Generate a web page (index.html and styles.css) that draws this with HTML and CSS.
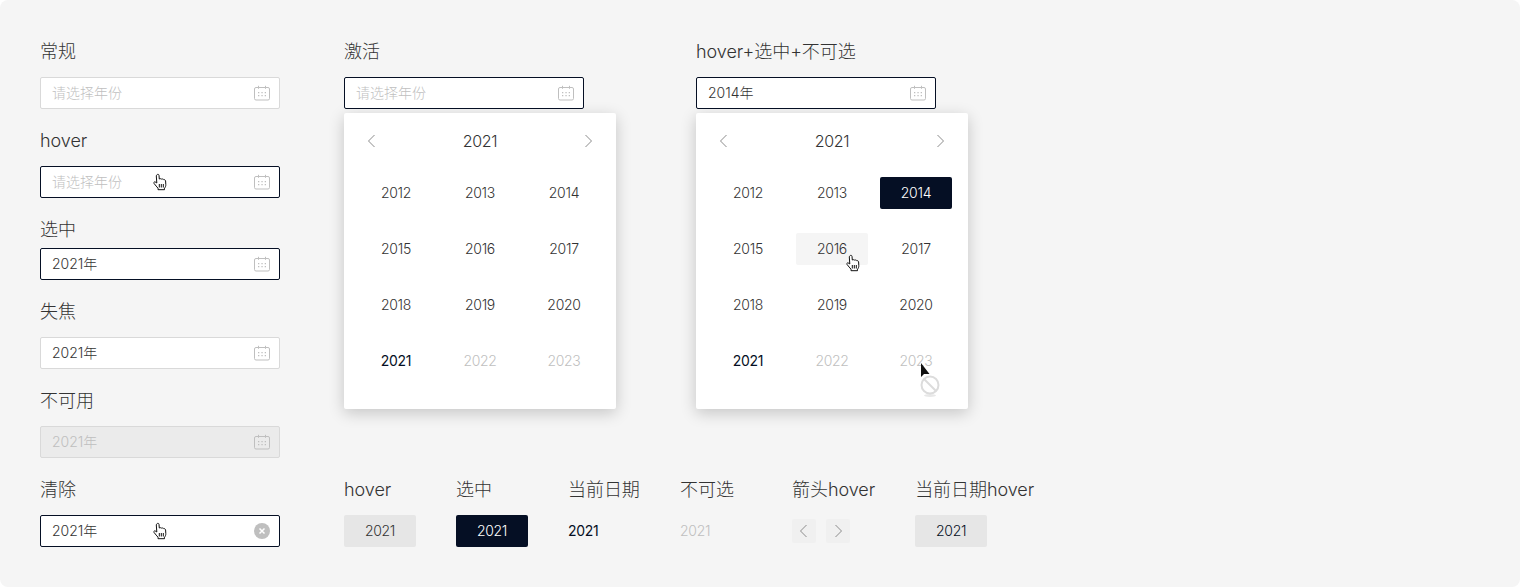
FILE: index.html
```html
<!DOCTYPE html>
<html lang="zh-CN">
<head>
  <meta charset="UTF-8" />
  <title>年份选择器</title>
  <link rel="stylesheet" href="styles.css">
</head>
<body>
  <svg class="defs" width="0" height="0">
    <symbol id="i-cal" viewBox="0 0 16 16">
      <path d="M2 2.500h12a1.500 1.500 0 0 1 1.500 1.500v9.500a1.500 1.500 0 0 1-1.500 1.500H2a1.500 1.500 0 0 1-1.500-1.500V4A1.500 1.500 0 0 1 2 2.500z" fill="none" stroke="currentColor"/>
      <path d="M4.500 .8v3M11.500 .8v3" fill="none" stroke="currentColor"/>
      <path d="M4 7h1.300v1.200H4zM7.400 7h1.300v1.200H7.400zM10.700 7H12v1.200h-1.300zM4 10h1.300v1.200H4zM7.400 10h1.300v1.200H7.400zM10.700 10H12v1.200h-1.300z" fill="currentColor"/>
    </symbol>
    <symbol id="i-left" viewBox="0 0 16 16">
      <path d="M10.500 2 4.500 8l6 6" fill="none" stroke="currentColor"/>
    </symbol>
    <symbol id="i-right" viewBox="0 0 16 16">
      <path d="M5.500 2l6 6-6 6" fill="none" stroke="currentColor"/>
    </symbol>
    <symbol id="i-hand" viewBox="0 0 15 18">
      <path d="M4.500 1.800c.7-.9 1.900-.5 2 .6l.3 3.600c.9-.5 1.900-.4 2.400.2.800-.4 1.700-.2 2.100.5.900-.2 1.700.3 1.800 1.300l.2 3.600c.1 1.500-.5 2.700-1.300 3.600v1.500H5.500v-1.500c-1.200-1.200-2.400-2.900-4-4.800-.5-.7 0-1.600.9-1.500.7.100 1.300.6 1.900 1.100L3.800 3c-.1-.5.200-.9.700-1.200z" fill="#fff" stroke="#111" stroke-width="1"/>
      <path d="M6.800 11v3.500M8.800 11v3.500M10.800 11v3.500" fill="none" stroke="#111" stroke-width="1"/>
    </symbol>
  </svg>

  <div class="board">
    <div class="col-left">
      <div class="field-group">
        <div class="label">常规</div>
        <div class="picker"><span class="placeholder">请选择年份</span><svg class="ico"><use href="#i-cal"/></svg></div>
      </div>
      <div class="field-group">
        <div class="label">hover</div>
        <div class="picker is-active"><span class="placeholder">请选择年份</span><svg class="ico"><use href="#i-cal"/></svg><svg class="hand hand-field"><use href="#i-hand"/></svg></div>
      </div>
      <div class="field-group tight">
        <div class="label">选中</div>
        <div class="picker is-active"><span>2021年</span><svg class="ico"><use href="#i-cal"/></svg></div>
      </div>
      <div class="field-group">
        <div class="label">失焦</div>
        <div class="picker"><span>2021年</span><svg class="ico"><use href="#i-cal"/></svg></div>
      </div>
      <div class="field-group">
        <div class="label">不可用</div>
        <div class="picker is-disabled"><span>2021年</span><svg class="ico"><use href="#i-cal"/></svg></div>
      </div>
      <div class="field-group">
        <div class="label">清除</div>
        <div class="picker is-active"><span>2021年</span>
          <svg class="ico clear" viewBox="0 0 16 16"><circle cx="8" cy="8" r="8" fill="#bfbfbf"/><path d="M5.500 5.500l5 5M10.500 5.500l-5 5" stroke="#fff" stroke-width="1.500" fill="none"/></svg>
          <svg class="hand hand-field"><use href="#i-hand"/></svg>
        </div>
      </div>
    </div>

    <div class="col-right">
      <div class="demos">
        <div class="demo">
          <div class="label">激活</div>
          <div class="picker is-active"><span class="placeholder">请选择年份</span><svg class="ico"><use href="#i-cal"/></svg></div>
          <div class="panel">
            <div class="panel-head">
              <svg class="arrow"><use href="#i-left"/></svg>
              <span class="panel-title">2021</span>
              <svg class="arrow"><use href="#i-right"/></svg>
            </div>
            <div class="years">
              <div class="year">2012</div><div class="year">2013</div><div class="year">2014</div>
              <div class="year">2015</div><div class="year">2016</div><div class="year">2017</div>
              <div class="year">2018</div><div class="year">2019</div><div class="year">2020</div>
              <div class="year current">2021</div><div class="year off">2022</div><div class="year off">2023</div>
            </div>
          </div>
        </div>

        <div class="demo">
          <div class="label">hover+选中+不可选</div>
          <div class="picker is-active"><span>2014年</span><svg class="ico"><use href="#i-cal"/></svg></div>
          <div class="panel">
            <div class="panel-head">
              <svg class="arrow"><use href="#i-left"/></svg>
              <span class="panel-title">2021</span>
              <svg class="arrow"><use href="#i-right"/></svg>
            </div>
            <div class="years">
              <div class="year">2012</div><div class="year">2013</div><div class="year selected">2014</div>
              <div class="year">2015</div><div class="year hovered">2016<svg class="hand hand-cell"><use href="#i-hand"/></svg></div><div class="year">2017</div>
              <div class="year">2018</div><div class="year">2019</div><div class="year">2020</div>
              <div class="year current">2021</div><div class="year off">2022</div>
              <div class="year off">2023
                <svg class="forbid" viewBox="0 0 24 36">
                  <path d="M1 0v14l3-3h5.500z" fill="#111"/>
                  <ellipse cx="10" cy="32.500" rx="6" ry="1.500" fill="#e8e8e8"/>
                  <circle cx="10" cy="22" r="8.500" fill="#fff" stroke="#dcdcdc" stroke-width="2"/>
                  <path d="M4 16l12 12" stroke="#dcdcdc" stroke-width="2"/>
                </svg>
              </div>
            </div>
          </div>
        </div>
      </div>

      <div class="states">
        <div class="state">
          <div class="label">hover</div>
          <div class="year sample-hover">2021</div>
        </div>
        <div class="state">
          <div class="label">选中</div>
          <div class="year selected">2021</div>
        </div>
        <div class="state">
          <div class="label">当前日期</div>
          <div class="year current left">2021</div>
        </div>
        <div class="state">
          <div class="label">不可选</div>
          <div class="year off left">2021</div>
        </div>
        <div class="state">
          <div class="label">箭头hover</div>
          <div class="arrow-row">
            <span class="arrow-btn"><svg class="arrow"><use href="#i-left"/></svg></span>
            <span class="arrow-btn"><svg class="arrow"><use href="#i-right"/></svg></span>
          </div>
        </div>
        <div class="state">
          <div class="label">当前日期hover</div>
          <div class="year sample-hover dark">2021</div>
        </div>
      </div>
    </div>
  </div>
</body>
</html>
```

FILE: styles.css
```css
html, body {
    margin: 0;
    padding: 0;
    background-color: #fff;
}

body {
    font-family: Inter, "Noto Sans CJK SC", sans-serif;
    font-weight: 300;
    color: #333;
    overflow: hidden;
}

.defs {
    display: block;
    height: 0;
}

.board {
    box-sizing: border-box;
    width: 1520px;
    height: 587px;
    padding: 40px;
    display: flex;
    gap: 64px;
    background-color: #f5f5f5;
    border-radius: 8px;
}

.label {
    font-size: 18px;
    line-height: 24px;
    letter-spacing: -0.05px;
    margin-bottom: 13px;
    color: #333;
    white-space: nowrap;
}

/* 左侧 输入框状态 */
.col-left {
    width: 240px;
    flex-shrink: 0;
}

.field-group {
    margin-bottom: 20px;
}

.field-group.tight .label {
    margin-bottom: 6px;
}

.picker {
    position: relative;
    box-sizing: border-box;
    width: 240px;
    height: 32px;
    padding: 0 9px 0 11px;
    display: flex;
    align-items: center;
    justify-content: space-between;
    background-color: #fff;
    border: 1px solid #d9d9d9;
    border-radius: 2px;
    font-size: 14px;
    color: #333;
}

.picker span {
    margin-bottom: 2px;
}

.picker.is-active {
    border-color: #050f24;
}

.picker.is-disabled {
    background-color: #ebebeb;
    color: #bfbfbf;
}

.placeholder {
    color: #bfbfbf;
}

.ico {
    width: 16px;
    height: 16px;
    color: #bfbfbf;
    flex-shrink: 0;
}

/* カーソル */
.hand {
    position: absolute;
    width: 16px;
    height: 18px;
}

.hand-field {
    left: 111px;
    top: 6px;
}

.hand-cell {
    left: 49px;
    top: 21px;
}

.forbid {
    position: absolute;
    left: 40px;
    top: 18px;
    width: 24px;
    height: 36px;
}

/* 右侧 */
.col-right {
    display: flex;
    flex-direction: column;
}

.demos {
    display: flex;
    gap: 80px;
}

.demo {
    width: 272px;
}

.panel {
    box-sizing: border-box;
    width: 272px;
    height: 296px;
    margin-top: 4px;
    padding: 0 16px;
    background-color: #fff;
    border-radius: 2px;
    box-shadow: 0 4px 16px rgba(0, 0, 0, 0.2);
}

.panel-head {
    height: 56px;
    margin-bottom: 8px;
    padding: 0 4px;
    display: flex;
    align-items: center;
    justify-content: space-between;
}

.panel-title {
    font-size: 16px;
    letter-spacing: -0.3px;
    color: #333;
}

.arrow {
    display: block;
    width: 16px;
    height: 16px;
    color: #8c8c8c;
}

.years {
    display: grid;
    grid-template-columns: repeat(3, 72px);
    column-gap: 12px;
    row-gap: 24px;
}

.year {
    position: relative;
    box-sizing: border-box;
    height: 32px;
    width: 72px;
    padding-bottom: 2px;
    display: flex;
    align-items: center;
    justify-content: center;
    font-size: 14px;
    letter-spacing: -0.3px;
    color: #333;
    border-radius: 2px;
}

.year.current {
    color: #050f24;
    font-weight: 400;
}

.year.off {
    color: #bfbfbf;
}

.year.selected {
    background-color: #050f24;
    color: #fff;
}

.year.hovered {
    background-color: #f5f5f5;
}

.year.sample-hover {
    background-color: #e6e6e6;
}

.year.dark {
    color: #050f24;
}

.year.left {
    justify-content: flex-start;
}

/* 下方 单元状态 */
.states {
    margin-top: 69px;
    display: flex;
    gap: 40px;
}

.state {
    min-width: 72px;
}

.arrow-row {
    display: flex;
    gap: 10px;
    padding-top: 4px;
}

.arrow-btn {
    width: 24px;
    height: 24px;
    display: flex;
    align-items: center;
    justify-content: center;
    background-color: #f0f0f0;
    border-radius: 2px;
}
```
